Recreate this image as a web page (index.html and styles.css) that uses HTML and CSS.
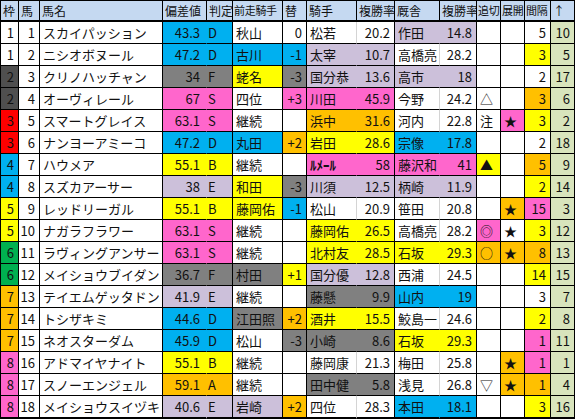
FILE: index.html
```html
<!DOCTYPE html>
<html lang="ja">
  <head>
    <meta charset="UTF-8" />
    <title>出馬表</title>
    <link rel="stylesheet" href="styles.css">
  </head>
  <body>
    <section class="tabla">
      <div class="fila cab">
        <div>枠</div><div>馬</div><div>馬名</div><div>偏差値</div><div>判定</div><div class="es">前走騎手</div><div>替</div><div>騎手</div><div>複勝率</div><div>厩舎</div><div>複勝率</div><div class="es">追切</div><div class="es">展開</div><div class="es">間隔</div><div>↑</div>
      </div>
      <div class="fila">
        <div class="r">1</div><div class="r">1</div><div>スカイパッション</div><div class="c r pa hv">43.3</div><div class="c gr">D</div><div>秋山</div><div class="r">0</div><div class="pa">松若</div><div class="r">20.2</div><div class="l pa">作田</div><div class="l r">14.8</div><div></div><div></div><div class="r">5</div><div class="up r">10</div>
      </div>
      <div class="fila">
        <div class="r">1</div><div class="r">2</div><div>ニシオボヌール</div><div class="c r pa hv">47.2</div><div class="c gr">D</div><div class="c">古川</div><div class="c r">-1</div><div class="l pa">太宰</div><div class="l r">10.7</div><div class="pa">高橋亮</div><div class="r">28.2</div><div></div><div></div><div class="y r">3</div><div class="up r">5</div>
      </div>
      <div class="fila">
        <div class="k2 r">2</div><div class="r">3</div><div>クリノハッチャン</div><div class="g r pa hv">34</div><div class="g gr">F</div><div class="y">蛯名</div><div class="g r">-3</div><div class="l pa">国分恭</div><div class="l r">13.6</div><div class="l pa">高市</div><div class="l r">18</div><div></div><div></div><div class="r">2</div><div class="up r">17</div>
      </div>
      <div class="fila">
        <div class="k2 r">2</div><div class="r">4</div><div>オーヴィレール</div><div class="p r pa hv">67</div><div class="p gr">S</div><div>四位</div><div class="p r">+3</div><div class="p pa">川田</div><div class="p r">45.9</div><div class="pa">今野</div><div class="r">24.2</div><div>△</div><div></div><div class="o r">3</div><div class="up r">6</div>
      </div>
      <div class="fila">
        <div class="k3 r">3</div><div class="r">5</div><div>スマートグレイス</div><div class="p r pa hv">63.1</div><div class="p gr">S</div><div>継続</div><div></div><div class="o pa">浜中</div><div class="o r">31.6</div><div class="pa">河内</div><div class="r">22.8</div><div>注</div><div class="p">★</div><div class="y r">3</div><div class="up r">2</div>
      </div>
      <div class="fila">
        <div class="k3 r">3</div><div class="r">6</div><div>ナンヨーアミーコ</div><div class="c r pa hv">47.2</div><div class="c gr">D</div><div class="c">丸田</div><div class="o r">+2</div><div class="y pa">岩田</div><div class="y r">28.6</div><div class="c pa">宗像</div><div class="c r">17.8</div><div></div><div></div><div class="r">2</div><div class="up r">18</div>
      </div>
      <div class="fila">
        <div class="c r">4</div><div class="r">7</div><div>ハウメア</div><div class="y r pa hv">55.1</div><div class="y gr">B</div><div>継続</div><div></div><div class="p pa hk">ﾙﾒｰﾙ</div><div class="p r">58</div><div class="p pa">藤沢和</div><div class="p r">41</div><div class="y">▲</div><div></div><div class="o r">5</div><div class="up r">9</div>
      </div>
      <div class="fila">
        <div class="c r">4</div><div class="r">8</div><div>スズカアーサー</div><div class="l r pa hv">38</div><div class="l gr">E</div><div class="y">和田</div><div class="g r">-3</div><div class="l pa">川須</div><div class="l r">12.5</div><div class="l pa">柄崎</div><div class="l r">11.9</div><div></div><div></div><div class="y r">2</div><div class="up r">14</div>
      </div>
      <div class="fila">
        <div class="y r">5</div><div class="r">9</div><div>レッドリーガル</div><div class="y r pa hv">55.1</div><div class="y gr">B</div><div class="y">藤岡佑</div><div class="c r">-1</div><div class="pa">松山</div><div class="r">20.9</div><div class="pa">笹田</div><div class="r">20.8</div><div></div><div class="o">★</div><div class="p r">15</div><div class="up r">3</div>
      </div>
      <div class="fila">
        <div class="y r">5</div><div class="r">10</div><div>ナガラフラワー</div><div class="p r pa hv">63.1</div><div class="p gr">S</div><div>継続</div><div></div><div class="y pa">藤岡佑</div><div class="y r">26.5</div><div class="pa">高橋亮</div><div class="r">28.2</div><div class="p">◎</div><div>★</div><div class="y r">3</div><div class="up r">12</div>
      </div>
      <div class="fila">
        <div class="k6 r">6</div><div class="r">11</div><div>ラヴィングアンサー</div><div class="p r pa hv">63.1</div><div class="p gr">S</div><div>継続</div><div></div><div class="y pa">北村友</div><div class="y r">28.5</div><div class="y pa">石坂</div><div class="y r">29.3</div><div class="o">○</div><div class="o">★</div><div class="o r">8</div><div class="up r">13</div>
      </div>
      <div class="fila">
        <div class="k6 r">6</div><div class="r">12</div><div>メイショウブイダン</div><div class="g r pa hv">36.7</div><div class="g gr">F</div><div class="g">村田</div><div class="y r">+1</div><div class="l pa">国分優</div><div class="l r">12.8</div><div class="pa">西浦</div><div class="r">24.5</div><div></div><div></div><div class="y r">14</div><div class="up r">15</div>
      </div>
      <div class="fila">
        <div class="o r">7</div><div class="r">13</div><div>テイエムゲッタドン</div><div class="l r pa hv">41.9</div><div class="l gr">E</div><div>継続</div><div></div><div class="g pa">藤懸</div><div class="g r">9.9</div><div class="c pa">山内</div><div class="c r">19</div><div></div><div></div><div class="r">3</div><div class="up r">7</div>
      </div>
      <div class="fila">
        <div class="o r">7</div><div class="r">14</div><div>トシザキミ</div><div class="c r pa hv">44.6</div><div class="c gr">D</div><div class="g">江田照</div><div class="o r">+2</div><div class="y pa">酒井</div><div class="y r">15.5</div><div class="pa">鮫島一</div><div class="r">24.6</div><div></div><div></div><div class="y r">2</div><div class="up r">8</div>
      </div>
      <div class="fila">
        <div class="o r">7</div><div class="r">15</div><div>ネオスターダム</div><div class="c r pa hv">45.9</div><div class="c gr">D</div><div>松山</div><div class="g r">-3</div><div class="g pa">小崎</div><div class="g r">8.6</div><div class="y pa">石坂</div><div class="y r">29.3</div><div></div><div></div><div class="p r">1</div><div class="up r">11</div>
      </div>
      <div class="fila">
        <div class="p r">8</div><div class="r">16</div><div>アドマイヤナイト</div><div class="y r pa hv">55.1</div><div class="y gr">B</div><div>継続</div><div></div><div class="pa">藤岡康</div><div class="r">21.3</div><div class="pa">梅田</div><div class="r">25.8</div><div></div><div class="o">★</div><div class="p r">1</div><div class="up r">1</div>
      </div>
      <div class="fila">
        <div class="p r">8</div><div class="r">17</div><div>スノーエンジェル</div><div class="o r pa hv">59.1</div><div class="o gr">A</div><div>継続</div><div></div><div class="g pa">田中健</div><div class="g r">5.8</div><div class="pa">浅見</div><div class="r">26.8</div><div>▽</div><div class="o">★</div><div class="o r">1</div><div class="up r">4</div>
      </div>
      <div class="fila ult">
        <div class="p r">8</div><div class="r">18</div><div>メイショウスイヅキ</div><div class="l r pa hv">40.6</div><div class="l gr">E</div><div class="l">岩崎</div><div class="o r">+2</div><div class="pa">四位</div><div class="r">28.3</div><div class="c pa">本田</div><div class="c r">18.1</div><div></div><div></div><div class="y r">3</div><div class="up r">16</div>
      </div>
    </section>
  </body>
</html>
```

FILE: styles.css
```css
* {
  margin: 0;
  padding: 0;
  box-sizing: border-box;
}

body {
  background: #fff;
  font-family: "Noto Sans CJK JP", "Noto Sans", sans-serif;
  font-size: 13px;
  color: #111;
}

.tabla {
  width: 575px;
  border-top: 1px solid #000;
  border-left: 1px solid #000;
}

.fila {
  display: grid;
  grid-template-columns: 18px 21px 123px 44px 26px 50px 24px 50px 38px 45px 37px 24px 24px 26px 24px;
}

.fila div {
  height: 22px;
  line-height: 21px;
  padding-left: 3px;
  white-space: nowrap;
  overflow: hidden;
  border-right: 1px solid #000;
  border-bottom: 1px solid #000;
  background-color: #fff;
}

.fila.cab div {
  height: 21px;
  line-height: 19px;
  padding-left: 2px;
  font-size: 12px;
  border-bottom-width: 2px;
  background-color: #c5d9f1;
}

.fila.cab div.es {
  font-size: 11px;
  padding-left: 1px;
  letter-spacing: -0.3px;
}

.fila.ult div {
  height: 23px;
  border-bottom-width: 2px;
}

.fila div.r {
  text-align: right;
  padding-left: 0;
  padding-right: 4px;
}

.fila div.hv {
  padding-right: 6px;
}

.fila div.gr {
  padding-left: 1px;
}

.fila div.hk {
  font-weight: bold;
}

/* colores */
.fila div.c { background-color: #00b0f0; }
.fila div.p { background-color: #ff66cc; }
.fila div.y { background-color: #ffff00; }
.fila div.g { background-color: #808080; }
.fila div.l { background-color: #ccc0da; }
.fila div.o { background-color: #ffc000; }
.fila div.k2 { background-color: #4f4f4f; }
.fila div.k3 { background-color: #ff0000; }
.fila div.k6 { background-color: #00b050; }
.fila div.up { background-color: #d8e4bc; }

/* pares sin borde */
.fila div.pa {
  border-right-color: #d4d4d4;
}

.fila div.pa.c,
.fila div.pa.p,
.fila div.pa.y,
.fila div.pa.g,
.fila div.pa.l,
.fila div.pa.o {
  border-right-color: transparent;
}
```
